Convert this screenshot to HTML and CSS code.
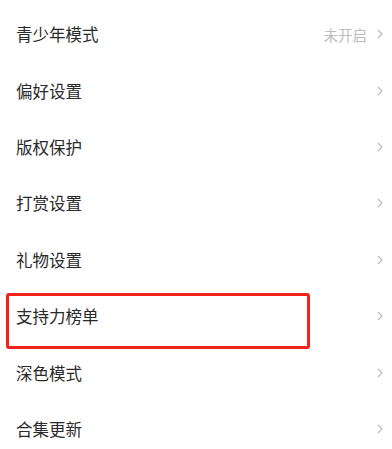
FILE: index.html
```html
<!DOCTYPE html>
<html lang="zh">
<head>
<meta charset="utf-8">
<link rel="stylesheet" href="styles.css">
</head>
<body>
<ul class="list">
  <li class="row"><span class="label">青少年模式</span><span class="right"><span class="value">未开启</span><svg class="chev" viewBox="0 0 6 10"><path d="M1 1 L5 5 L1 9"/></svg></span></li>
  <li class="row"><span class="label">偏好设置</span><span class="right"><svg class="chev" viewBox="0 0 6 10"><path d="M1 1 L5 5 L1 9"/></svg></span></li>
  <li class="row"><span class="label">版权保护</span><span class="right"><svg class="chev" viewBox="0 0 6 10"><path d="M1 1 L5 5 L1 9"/></svg></span></li>
  <li class="row"><span class="label">打赏设置</span><span class="right"><svg class="chev" viewBox="0 0 6 10"><path d="M1 1 L5 5 L1 9"/></svg></span></li>
  <li class="row"><span class="label">礼物设置</span><span class="right"><svg class="chev" viewBox="0 0 6 10"><path d="M1 1 L5 5 L1 9"/></svg></span></li>
  <li class="row marked"><span class="label">支持力榜单</span><span class="right"><svg class="chev" viewBox="0 0 6 10"><path d="M1 1 L5 5 L1 9"/></svg></span><span class="highlight"></span></li>
  <li class="row"><span class="label">深色模式</span><span class="right"><svg class="chev" viewBox="0 0 6 10"><path d="M1 1 L5 5 L1 9"/></svg></span></li>
  <li class="row"><span class="label">合集更新</span><span class="right"><svg class="chev" viewBox="0 0 6 10"><path d="M1 1 L5 5 L1 9"/></svg></span></li>
</ul>
</body>
</html>
```
FILE: styles.css
```css
html, body {
  margin: 0;
  padding: 0;
  background: #fff;
}
body {
  font-family: "Noto Sans CJK SC", "Noto Sans", sans-serif;
  width: 392px;
  height: 449px;
  overflow: hidden;
}
.list {
  list-style: none;
  margin: 0;
  padding: 6px 0 0 0;
}
.row {
  position: relative;
  height: 56.4px;
  display: flex;
  align-items: center;
  justify-content: space-between;
  padding: 0 9px 0 16px;
}
.label {
  font-size: 16.5px;
  color: #2a2a2a;
}
.right {
  display: flex;
  align-items: center;
  gap: 10px;
}
.value {
  font-size: 14.5px;
  color: #bcbcbc;
}
.chev {
  width: 6px;
  height: 10px;
  fill: none;
  stroke: #b8b8b8;
  stroke-width: 1.1;
}
.highlight {
  position: absolute;
  left: 6px;
  top: 5px;
  width: 304px;
  height: 56px;
  box-sizing: border-box;
  border: 3px solid #f5211b;
  border-radius: 3px;
}
```
